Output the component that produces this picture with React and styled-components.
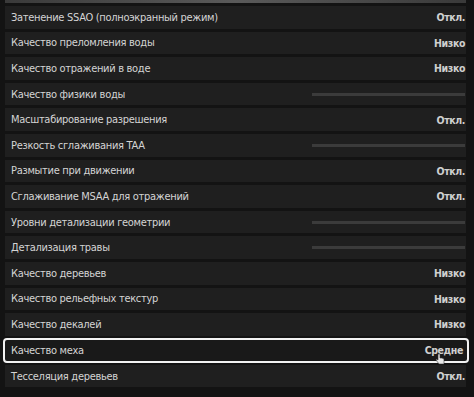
import React from "react";
import styled, { createGlobalStyle } from "styled-components";

const GlobalStyle = createGlobalStyle`
  html, body {
    margin: 0;
    padding: 0;
    background: #121212;
  }
  body {
    font-family: "DejaVu Sans Condensed", "DejaVu Sans", sans-serif;
  }
`;

const Panel = styled.div`
  width: 474px;
  height: 397px;
  overflow: hidden;
  background: #131313;
  display: flex;
  flex-direction: column;
  padding: 0 8px 0 5px;
  box-sizing: border-box;
`;

const TopEdge = styled.div`
  height: 3px;
  margin: 0 0 3px 0;
  background: linear-gradient(90deg, #3a3a3a, #5a5a5a 50%, #3a3a3a);
`;

const List = styled.div`
  display: flex;
  flex-direction: column;
  gap: 3px;
`;

const Row = styled.div`
  position: relative;
  height: 22.6px;
  display: flex;
  align-items: center;
  justify-content: space-between;
  padding: 0 1px 0 6px;
  background: #1f1f1f;
  box-sizing: border-box;
  ${(p) =>
    p.$active &&
    `
    margin: -1px -3px -1px -2px;
    padding: 0 4px 0 6px;
    height: 25px;
    background: #191919;
    border: 2px solid #f2f2f2;
    border-radius: 4px;
  `}
`;

const Label = styled.span`
  color: #d4d4d4;
  font-size: 11px;
  letter-spacing: -0.3px;
  white-space: nowrap;
`;

const Value = styled.span`
  color: #cfcfcf;
  font-size: 10.5px;
  font-weight: bold;
  letter-spacing: -0.4px;
  white-space: nowrap;
`;

const Slider = styled.div`
  width: 153px;
  height: 3px;
  background: #3b3b3b;
`;

const Cursor = styled.svg`
  position: absolute;
  right: 22px;
  top: 13px;
`;

const rows = [
  { label: "Затенение SSAO (полноэкранный режим)", value: "Откл." },
  { label: "Качество преломления воды", value: "Низко" },
  { label: "Качество отражений в воде", value: "Низко" },
  { label: "Качество физики воды", slider: true },
  { label: "Масштабирование разрешения", value: "Откл." },
  { label: "Резкость сглаживания TAA", slider: true },
  { label: "Размытие при движении", value: "Откл." },
  { label: "Сглаживание MSAA для отражений", value: "Откл." },
  { label: "Уровни детализации геометрии", slider: true },
  { label: "Детализация травы", slider: true },
  { label: "Качество деревьев", value: "Низко" },
  { label: "Качество рельефных текстур", value: "Низко" },
  { label: "Качество декалей", value: "Низко" },
  { label: "Качество меха", value: "Средне", active: true },
  { label: "Тесселяция деревьев", value: "Откл." },
];

export default function App() {
  return (
    <>
      <GlobalStyle />
      <Panel>
        <TopEdge />
        <List>
          {rows.map((r) => (
            <Row key={r.label} $active={r.active}>
              <Label>{r.label}</Label>
              {r.slider ? <Slider /> : <Value>{r.value}</Value>}
              {r.active && (
                <Cursor width="10" height="12" viewBox="0 0 10 12">
                  <path
                    d="M3 1 L3 7 L1.5 6 L1 7 L4 11 L9 11 L9 6 L7 5 L5 5 L5 1 Z"
                    fill="#e8e8e8"
                    stroke="#333"
                    strokeWidth="0.6"
                  />
                </Cursor>
              )}
            </Row>
          ))}
        </List>
      </Panel>
    </>
  );
}
